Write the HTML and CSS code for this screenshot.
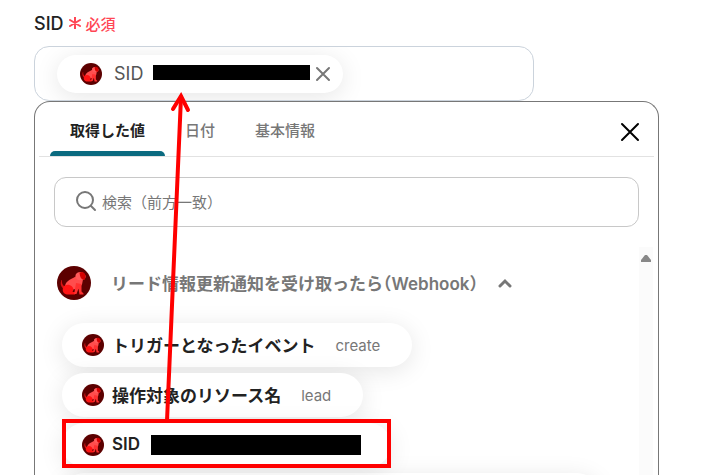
FILE: index.html
```html
<!DOCTYPE html>
<html lang="ja">
<head>
    <meta charset="UTF-8">
    <meta name="viewport" content="width=device-width, initial-scale=1.0">
    <title>SID</title>
    <link rel="stylesheet" href="styles.css">
</head>
<body>
    <svg class="sprite" aria-hidden="true">
        <symbol id="dog" viewBox="0 0 34 34">
            <circle cx="17" cy="17" r="17" fill="#5c0000"/>
            <path d="M4.500 14c-1.500 3-1 6 1.500 8.500l2-1.500c-2.500-2-3.500-4-3-7z" fill="#d91414"/>
            <path d="M8 20c1-5 5-6.500 9-8.500l3-2 6 4-1 5-3 4-6 1-7 3c-2-2-2-4-1-6.500z" fill="#ff4d4d"/>
            <path d="M18.500 9c1-2.500 4-3.500 7-2.500l3 3c.5 2-.5 4-3 4.500h-2c-3 1-5-2-5-5z" fill="#ff5a5a"/>
            <path d="M22.500 6.500c3-1.500 5.500 0 6 3l-.5 4c-3.500 1-5-2-5.500-7z" fill="#d40000"/>
            <path d="M6 22c1-3.500 6-4.500 9-1.500 2 2 1.500 4 .5 5.500h2.500v2.500H10c-3-.5-5-3-4-6.500z" fill="#ff1414"/>
            <path d="M19 17l5.500 1v7.500l2 2v1h-4l-1-6-2 5.500H17l.5-2z" fill="#ff3030"/>
        </symbol>
    </svg>

    <main class="page">
        <div class="field-head">
            <label for="sid">SID</label>
            <span class="required">
                <svg width="12" height="12" viewBox="0 0 12 12"><path d="M6 0v12M1 3l10 6M11 3L1 9"/></svg>
                必須
            </span>
        </div>

        <div class="field">
            <span class="chip">
                <svg class="icon"><use href="#dog"/></svg>
                <span class="chip-name">SID</span>
                <span class="mask mask-chip"></span>
                <button class="close close-small" type="button" aria-label="削除">
                    <svg width="16" height="16" viewBox="0 0 16 16"><path d="M2 2l12 12M14 2L2 14"/></svg>
                </button>
            </span>
            <input id="sid" type="text">
        </div>

        <section class="panel">
            <div class="tabs">
                <button class="tab active" type="button">取得した値</button>
                <button class="tab" type="button">日付</button>
                <button class="tab" type="button">基本情報</button>
                <button class="close close-panel" type="button" aria-label="閉じる">
                    <svg width="20" height="20" viewBox="0 0 20 20"><path d="M2 2l16 16M18 2L2 18"/></svg>
                </button>
            </div>

            <div class="search">
                <svg width="22" height="22" viewBox="0 0 22 22"><circle cx="10" cy="9" r="8"/><path d="M16 15l4 4"/></svg>
                <input type="search" placeholder="検索（前方一致）" aria-label="検索">
            </div>

            <div class="results">
                <div class="results-body">
                    <button class="group" type="button">
                        <svg class="icon-large"><use href="#dog"/></svg>
                        <span class="group-name">リード情報更新通知を受け取ったら（Webhook）</span>
                        <svg class="chevron" width="14" height="10" viewBox="0 0 14 10"><path d="M2 8l5-5 5 5"/></svg>
                    </button>
                    <ul class="values">
                        <li>
                            <button class="value" type="button">
                                <svg class="icon"><use href="#dog"/></svg>
                                <span class="value-name">トリガーとなったイベント</span>
                                <span class="value-sample">create</span>
                            </button>
                        </li>
                        <li>
                            <button class="value" type="button">
                                <svg class="icon"><use href="#dog"/></svg>
                                <span class="value-name">操作対象のリソース名</span>
                                <span class="value-sample">lead</span>
                            </button>
                        </li>
                        <li class="marked">
                            <button class="value" type="button">
                                <svg class="icon"><use href="#dog"/></svg>
                                <span class="value-name">SID</span>
                                <span class="mask mask-value"></span>
                            </button>
                            <svg class="arrow" width="24" height="330" viewBox="0 0 24 330">
                                <path d="M4 328L18 4"/>
                                <path d="M10 16l8-13 7 14"/>
                            </svg>
                        </li>
                        <li><span class="value value-wide"></span></li>
                    </ul>
                </div>
                <div class="scrollbar">
                    <svg width="10" height="8" viewBox="0 0 10 8"><path d="M4 0h2l4 5v2H0V5z"/></svg>
                </div>
            </div>
        </section>
    </main>
</body>
</html>
```

FILE: styles.css
```css
* {
    box-sizing: border-box;
}
body {
    margin: 0;
    background: #fff;
    color: #222;
    font-family: Inter, "Noto Sans CJK JP", sans-serif;
    font-size: 15px;
}
button, input {
    margin: 0;
    padding: 0;
    border: 0;
    background: none;
    color: inherit;
    font: inherit;
}
button {
    cursor: pointer;
}
svg {
    display: block;
    flex: none;
    fill: none;
    stroke-linecap: round;
}
.sprite {
    position: absolute;
    width: 0;
    height: 0;
}
.page {
    display: flex;
    flex-direction: column;
    height: 100vh;
    padding: 10px 57px 0 34px;
    overflow: hidden;
}

/* label row */
.field-head {
    display: flex;
    flex: none;
    align-items: center;
    gap: 5px;
    height: 26px;
    margin-bottom: 10px;
    font-size: 18px;
    font-weight: 500;
}
.required {
    display: flex;
    align-items: center;
    gap: 5px;
    color: #ff4655;
    font-size: 15px;
}
.required svg {
    stroke: #ff4655;
    stroke-width: 2;
}

/* input with the selected value */
.field {
    display: flex;
    flex: none;
    align-items: center;
    width: 80%;
    height: 55px;
    padding: 0 22px;
    border: 1px solid #cbd3dc;
    border-radius: 15px;
    overflow: hidden;
}
.field input {
    flex: 1;
    min-width: 0;
    outline: none;
}
.chip {
    display: flex;
    flex: none;
    align-items: center;
    height: 38px;
    padding: 0 12px 0 23px;
    border-radius: 19px;
    background: #fff;
    box-shadow: 0 4px 24px rgba(0, 0, 0, 0.1);
}
.icon {
    width: 22px;
    height: 22px;
}
.chip-name {
    margin: 0 10px 0 12px;
    color: #555;
    font-size: 18px;
}
.mask {
    background: #000;
}
.mask-chip {
    width: 157px;
    height: 15px;
    margin-bottom: 3px;
}
.close-small {
    margin-left: 5px;
}
.close-small svg {
    stroke: #777;
    stroke-width: 2;
}

/* dropdown panel */
.panel {
    display: flex;
    flex: 1;
    flex-direction: column;
    min-height: 0;
    border: 1px solid #777;
    border-bottom: 0;
    border-radius: 16px 16px 0 0;
    background: #fff;
}
.tabs {
    display: flex;
    flex: none;
    height: 55px;
    margin: 0 4px;
    padding: 0 14px 0 11px;
    border-bottom: 1px solid #e2e2e2;
}
.tab {
    position: relative;
    padding: 0 20px;
    color: #777;
    font-weight: 500;
}
.tab.active {
    color: #222;
    font-weight: 700;
}
.tab.active::after {
    content: "";
    position: absolute;
    right: 0;
    bottom: 0;
    left: 0;
    height: 5px;
    border-radius: 5px 5px 0 0;
    background: #0b6b80;
}
.close-panel {
    margin-left: auto;
    padding-top: 5px;
}
.close-panel svg {
    stroke: #000;
    stroke-width: 2;
}
.search {
    display: flex;
    flex: none;
    align-items: center;
    gap: 5px;
    height: 50px;
    margin: 20px 19px;
    padding: 0 20px;
    border: 1px solid #c8c8c8;
    border-radius: 12px;
}
.search svg {
    stroke: #777;
    stroke-width: 2;
}
.search input {
    flex: 1;
    min-width: 0;
    outline: none;
}
.search input::placeholder {
    color: #777;
    opacity: 1;
}

/* result list */
.results {
    display: flex;
    flex: 1;
    min-height: 0;
    padding-right: 5px;
}
.results-body {
    flex: 1;
    min-width: 0;
    padding: 19px 22px 0;
}
.scrollbar {
    display: flex;
    flex: none;
    justify-content: center;
    width: 14px;
    padding-top: 8px;
    background: #fbfbfb;
}
.scrollbar svg {
    fill: #888;
}
.group {
    display: flex;
    align-items: center;
    height: 34px;
    color: #777;
    font-size: 17px;
    font-weight: 600;
    white-space: nowrap;
}
.icon-large {
    width: 34px;
    height: 34px;
}
.group-name {
    margin: 0 20px;
    padding-bottom: 2px;
    font-feature-settings: "halt";
}
.chevron {
    stroke: #777;
    stroke-width: 3;
}
.values {
    display: flex;
    flex-direction: column;
    align-items: flex-start;
    gap: 6px;
    margin: 23px 0 0 5px;
    padding: 0;
    list-style: none;
}
.value {
    display: flex;
    align-items: center;
    height: 44px;
    padding: 0 32px 0 20px;
    border-radius: 22px;
    background: #fff;
    box-shadow: 0 4px 24px rgba(0, 0, 0, 0.1);
    font-size: 17px;
    white-space: nowrap;
}
.value-name {
    margin-left: 8px;
    padding-bottom: 2px;
    font-weight: 600;
}
.value-sample {
    margin-left: 20px;
    color: #777;
    font-size: 15px;
}
.value-wide {
    width: 75vw;
}
.mask-value {
    width: 210px;
    height: 20px;
    margin-left: 11px;
}

/* highlighted value and the arrow up to the field */
.marked {
    position: relative;
}
.marked .value {
    padding-right: 30px;
}
.marked::after {
    content: "";
    position: absolute;
    inset: -4px 0 -1px;
    border: 4px solid #f00;
}
.arrow {
    position: absolute;
    bottom: 44px;
    left: 101px;
    stroke: #f00;
    stroke-width: 4;
    overflow: visible;
}
```
